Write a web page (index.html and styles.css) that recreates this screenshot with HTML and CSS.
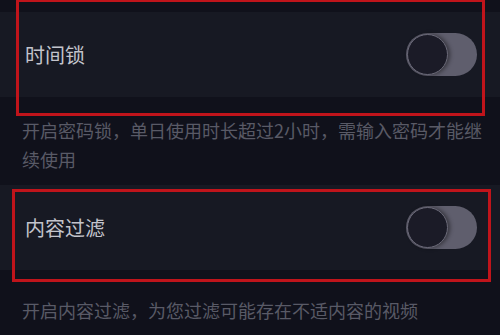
FILE: index.html
```html
<!DOCTYPE html>
<html lang="zh-CN">
<head>
    <meta charset="UTF-8">
    <meta name="viewport" content="width=device-width, initial-scale=1.0">
    <title>青少年模式设置</title>
    <link rel="stylesheet" href="styles.css">
</head>
<body>
    <div class="settings">
        <!-- 时间锁 -->
        <div class="setting-row">
            <span class="setting-label">时间锁</span>
            <div class="switch"><div class="knob"></div></div>
        </div>
        <p class="setting-desc desc-lock">开启密码锁，单日使用时长超过2小时，需输入密码才能继续使用</p>

        <!-- 内容过滤 -->
        <div class="setting-row">
            <span class="setting-label">内容过滤</span>
            <div class="switch"><div class="knob"></div></div>
        </div>
        <p class="setting-desc desc-filter">开启内容过滤，为您过滤可能存在不适内容的视频</p>

        <!-- Annotation boxes -->
        <div class="mark mark-one"></div>
        <div class="mark mark-two"></div>
    </div>
</body>
</html>
```

FILE: styles.css
```css
* {
    margin: 0;
    padding: 0;
    box-sizing: border-box;
}

body {
    font-family: "Noto Sans CJK SC", "Noto Sans", sans-serif;
    background: #10111b;
    width: 500px;
    height: 335px;
    overflow: hidden;
}

.settings {
    position: relative;
    padding-top: 12px;
    height: 335px;
}

/* Rows */
.setting-row {
    height: 85px;
    background: #171923;
    display: flex;
    align-items: center;
    justify-content: space-between;
    padding: 0 23px 0 25px;
}

.setting-label {
    font-size: 20px;
    color: #c3c4cc;
    line-height: 1;
}

/* Switch (off) */
.switch {
    width: 71px;
    height: 43px;
    border-radius: 22px;
    background: #5f5e6d;
    padding: 1px;
    display: flex;
    align-items: center;
}

.knob {
    width: 41px;
    height: 41px;
    border-radius: 50%;
    background: #1b1b27;
    border: 1px solid #6b6a79;
    box-shadow: 2px 0 4px rgba(0, 0, 0, 0.45);
}

/* Descriptions */
.setting-desc {
    font-size: 18px;
    color: #595a66;
    line-height: 29px;
    padding: 0 14px 0 22px;
}

.desc-lock {
    height: 88px;
    padding-top: 19px;
}

.desc-filter {
    padding-top: 26px;
}

/* Red annotation frames */
.mark {
    position: absolute;
    border: 3px solid #c0141b;
}

.mark-one {
    left: 16px;
    top: -1px;
    width: 469px;
    height: 117px;
}

.mark-two {
    left: 12px;
    top: 189px;
    width: 479px;
    height: 93px;
}
```
